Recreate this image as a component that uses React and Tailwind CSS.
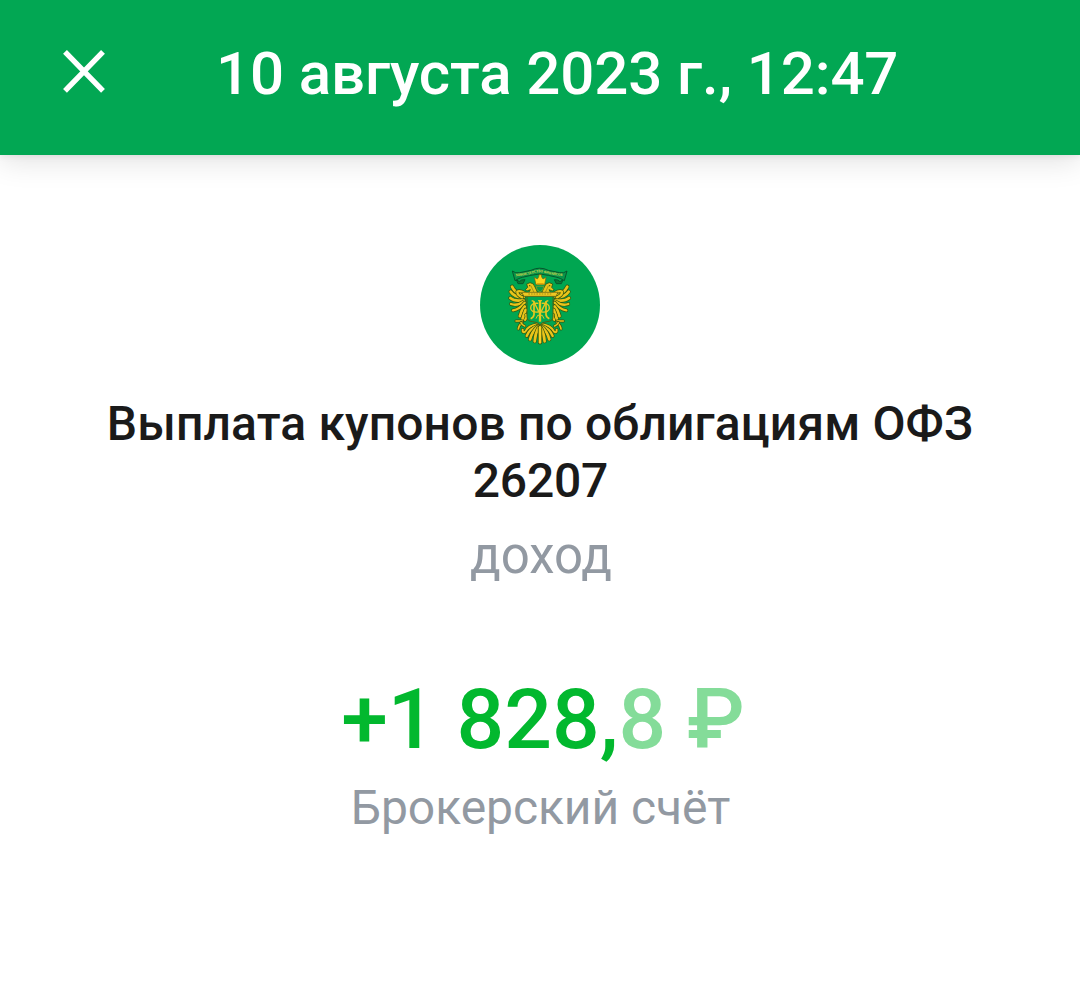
// Left side feathers, listed from back to front. `w` is the feather's width.
const FEATHERS = [
  // wing
  { d: "M146 166 Q120 160 111 140", w: 8 },
  { d: "M146 172 Q118 172 107 155", w: 8 },
  { d: "M146 180 Q120 186 106 174", w: 8 },
  { d: "M148 184 Q126 199 108 192", w: 7 },
  { d: "M149 188 Q134 208 114 211", w: 7 },
  { d: "M150 160 Q134 150 127 155 Q126 166 142 172", w: 7 },
  // leg
  { d: "M149 200 Q138 212 135 228", w: 9 },
  { d: "M152 210 Q147 222 143 237", w: 9 },
  { d: "M153 224 Q157 232 150 240", w: 6 },
  // claw
  { d: "M142 243 L123 243", w: 5 },
  { d: "M142 247 Q131 256 130 267", w: 5 },
  { d: "M138 248 Q142 256 149 258", w: 5 },
  // tail
  { d: "M188 253 Q160 256 151 275 Q142 280 143 269", w: 6 },
  { d: "M188 257 Q164 266 155 288", w: 7 },
  { d: "M190 258 Q170 276 165 298", w: 8 },
  { d: "M192 260 Q180 282 179 304", w: 8 },
];

function EagleHalf() {
  return (
    <g strokeLinecap="round" strokeLinejoin="round">
      {/* dark scroll ends under the ribbon */}
      <path d="M125 120 L133 125 L140 120 L150 119 L144 131 L130 131Z" fill="#0b7a35" stroke="#07562c" strokeWidth="3" />

      {FEATHERS.map(({ d, w }) => (
        <g key={d} fill="none">
          <path d={d} stroke="#34540f" strokeWidth={w + 4} />
          <path d={d} stroke="#eac41a" strokeWidth={w} />
        </g>
      ))}

      {/* neck and head */}
      <path
        d="M152 148 L158 142 L155 132 L165 128 Q177 129 180 141 L187 156 L187 162 L158 162 Q164 154 166 149 L156 153Z"
        fill="#e8c51b"
        stroke="#34540f"
        strokeWidth="2.5"
      />
      <path d="M168 138 L176 155" stroke="#8a7813" strokeWidth="2" />
      <circle cx="164" cy="137" r="2" fill="#34540f" />
    </g>
  );
}

function MinfinEmblem() {
  return (
    <svg viewBox="15 15 360 360" className="h-[120px] w-[120px]" aria-hidden="true">
      <circle cx="195" cy="195" r="180" fill="#00a651" />

      <EagleHalf />
      <g transform="translate(388 0) scale(-1 1)">
        <EagleHalf />
      </g>

      {/* ribbon */}
      <path
        d="M112 93 Q122 101 134 98 L168 91 Q194 78 220 91 L254 98 Q266 101 276 93 L268 122 Q256 114 246 112 L220 106 Q194 98 168 106 L142 112 Q132 114 120 122Z"
        fill="#08954a"
        stroke="#07562c"
        strokeWidth="3"
      />
      <path id="ribbon-line" d="M122 109 Q158 105 178 99 Q194 95 210 99 Q230 105 268 109" fill="none" />
      <text
        fill="#e2de4c"
        fontFamily="Liberation Serif, serif"
        fontSize="11"
        fontWeight="700"
      >
        <textPath href="#ribbon-line" textLength="142" lengthAdjust="spacingAndGlyphs">
          МИНИСТЕРСТВО ФИНАНСОВ
        </textPath>
      </text>

      {/* crown */}
      <path
        d="M178 112 L187 117 L191 111 L192 104 L199 104 L200 111 L204 117 L213 112 L209 134 L183 134Z"
        fill="#fbd31a"
        stroke="#705f10"
        strokeWidth="2"
      />
      <path d="M186 131 L206 131" stroke="#dca60c" strokeWidth="4" />
      <path d="M184 139 L206 139 L204 149 L195 156 L186 149Z" fill="#079848" stroke="#a59a18" strokeWidth="2" />

      {/* shield */}
      <path
        d="M156 168 L234 168 L234 230 Q234 244 216 245 Q201 246 195 255 Q188 246 173 245 Q156 244 156 230Z"
        fill="#00a651"
        stroke="#4d6212"
        strokeWidth="3"
      />
      <path d="M140 157 L249 157 L243 169 L147 169Z" fill="#efc822" stroke="#5e5a10" strokeWidth="2" />
      <path d="M160 162 L230 162" stroke="#a58f15" strokeWidth="3" strokeDasharray="5 3" />

      {/* monogram */}
      <g fill="none" stroke="#e6c820" strokeWidth="5">
        <path d="M195 181 L195 245" strokeWidth="7" />
        <path d="M189 182 L201 182" strokeWidth="3" />
        <path d="M170 182 L176 184 L195 222 L214 184 L220 182" strokeWidth="4" />
        <path d="M177 184 L177 224 Q176 232 167 236 M213 184 L213 224 Q214 232 223 236" />
        <path
          d="M190 190 Q166 188 167 205 Q168 218 190 216 M200 190 Q224 188 223 205 Q222 218 200 216"
          strokeWidth="4"
        />
        <path d="M183 236 L188 226 L202 226 L207 236" strokeWidth="3" />
      </g>

      {/* central tail feather */}
      <path d="M195 262 L195 307" stroke="#34540f" strokeWidth="13" strokeLinecap="round" />
      <path d="M195 262 L195 307" stroke="#f5d222" strokeWidth="8" strokeLinecap="round" />
    </svg>
  );
}

function Header({ title }) {
  return (
    <header className="flex h-[155px] items-start bg-[#02a753] shadow-[0_2px_6px_rgba(0,0,0,0.06),0_6px_28px_rgba(0,0,0,0.12)]">
      <button type="button" aria-label="Закрыть" className="mt-[49px] ml-[62px] h-11 w-11 shrink-0">
        <svg viewBox="0 0 44 44" className="h-11 w-11" stroke="white" strokeWidth="5.4">
          <path d="M3 2.8 L41 41.8 M41 2.8 L3 41.8" />
        </svg>
      </button>
      <h1 className="mt-[38px] ml-[110px] text-[60px] leading-[72px] font-medium tracking-[-0.12px] whitespace-nowrap text-white">
        {title}
      </h1>
    </header>
  );
}

export default function App() {
  return (
    <div className="flex h-[998px] w-[1080px] flex-col overflow-hidden bg-white font-['Roboto',sans-serif]">
      <Header title="10 августа 2023 г., 12:47" />

      <main className="flex flex-col items-center pt-[90px] text-center">
        <MinfinEmblem />

        <h2 className="mt-[30px] text-[48px] leading-[57px] font-medium whitespace-nowrap text-[#1a1a1a]">
          <span className="tracking-[0.13px]">Выплата купонов по облигациям ОФЗ</span>
          <br />
          <span className="pl-px tracking-[-0.2px]">26207</span>
        </h2>
        <p className="mt-[15px] pl-0.5 text-[51px] leading-[64px] text-[#9299a2]">доход</p>

        <p className="mt-[83px] ml-[6px] text-[84px] leading-[98px] font-medium whitespace-nowrap text-[#02b82e]">
          +1 828,<span className="text-[#84dc99]">8 ₽</span>
        </p>
        <p className="mt-[11px] pl-px text-[48px] leading-[56px] tracking-[-0.07px] text-[#9299a2]">Брокерский счёт</p>
      </main>
    </div>
  );
}
